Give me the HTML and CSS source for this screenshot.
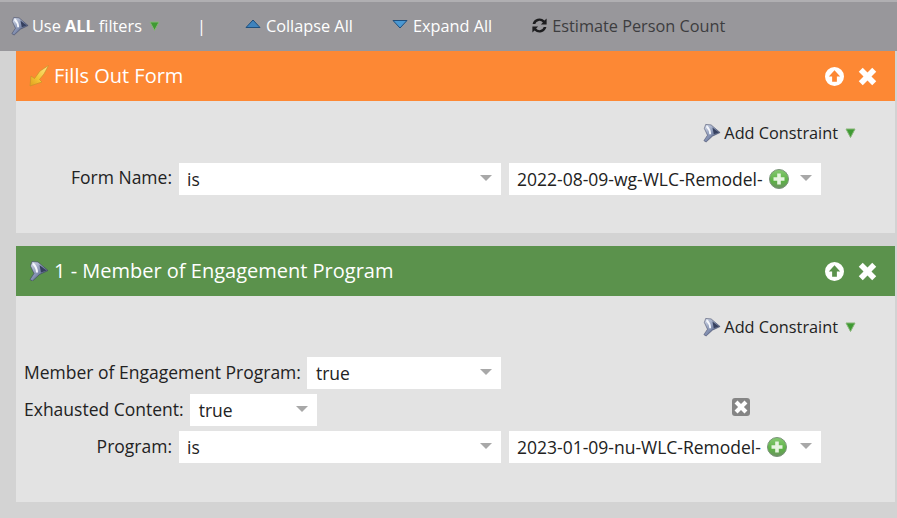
FILE: index.html
```html
<!DOCTYPE html>
<html lang="en">
<head>
<meta charset="utf-8">
<title>Smart List</title>
<link rel="stylesheet" href="styles.css">
</head>
<body>
<svg class="defs" width="0" height="0" aria-hidden="true">
  <defs>
    <linearGradient id="fg" x1="0" y1="0" x2="1" y2="1">
      <stop offset="0" stop-color="#dde3ef"/><stop offset=".5" stop-color="#8491b2"/><stop offset="1" stop-color="#2c3554"/>
    </linearGradient>
    <linearGradient id="bolt" x1="1" y1="0" x2="0" y2="1">
      <stop offset="0" stop-color="#fbe58a"/><stop offset=".6" stop-color="#f4c534"/><stop offset="1" stop-color="#e0a020"/>
    </linearGradient>
    <linearGradient id="plusg" x1="0" y1="0" x2="0" y2="1">
      <stop offset="0" stop-color="#86c972"/><stop offset=".6" stop-color="#5cb245"/><stop offset="1" stop-color="#6d9263"/>
    </linearGradient>
    <symbol id="funnel" viewBox="0 0 20 20">
      <path d="M3 .5L9 1L19 9.500L10.500 13.500L3.500 20L1 18.500L5 12.500L1.500 5Z" fill="url(#fg)" stroke="#3a4260" stroke-width=".6"/>
      <path d="M4 2.500C6.500 5 8 8 8 11.500" fill="none" stroke="#f5f7fc" stroke-width="2"/>
      <path d="M10.500 4L17.500 9.500L12 11.500Z" fill="#36405f"/>
    </symbol>
    <symbol id="down" viewBox="0 0 11 10">
      <path d="M1 1H10L5.500 9.500Z" fill="#3f9a33" stroke="#86b577" stroke-width="1"/>
    </symbol>
    <symbol id="plus" viewBox="0 0 20 20">
      <circle cx="10" cy="10" r="9.500" fill="url(#plusg)" stroke="#7a937a"/>
      <path d="M8.200 4.500h3.600v3.700h3.700v3.600h-3.700v3.700H8.200v-3.700H4.500V8.200h3.700Z" fill="#e6f4e0"/>
    </symbol>
    <symbol id="up" viewBox="0 0 20 20">
      <path fill-rule="evenodd" d="M10 0a10 10 0 1 0 0 20a10 10 0 0 0 0-20ZM10 3.500L16 10H12.500V15.500H7.500V10H4Z" fill="#fff"/>
    </symbol>
    <symbol id="close" viewBox="0 0 20 20">
      <path d="M5 .8L10 5.800L15 .8L19.200 5L14.200 10L19.200 15L15 19.200L10 14.200L5 19.200L.8 15L5.800 10L.8 5Z" fill="#fff"/>
    </symbol>
  </defs>
</svg>

<header class="toolbar">
  <span class="tool tool-filter">
    <svg class="icon-funnel"><use href="#funnel"/></svg>
    <span>Use <b>ALL</b> filters</span>
    <svg class="icon-down"><use href="#down"/></svg>
  </span>
  <span class="divider">|</span>
  <span class="tool tool-collapse">
    <svg class="icon-tri" viewBox="0 0 16 10"><path d="M8 1L15 8.500H1Z" fill="#3f83bd" stroke="#1f4f7d"/></svg>
    <span>Collapse All</span>
  </span>
  <span class="tool tool-expand">
    <svg class="icon-tri" viewBox="0 0 16 10"><path d="M1 1.500H15L8 9Z" fill="#4b98d2" stroke="#1f4f7d"/></svg>
    <span>Expand All</span>
  </span>
  <span class="tool tool-estimate">
    <svg class="icon-refresh" viewBox="0 0 16 16"><path d="M1.500 6.500A6.700 6.700 0 0 1 12.700 3.300L14.700 1.500V7H9.300L11.200 5.100A4.200 4.200 0 0 0 4 6.500Z M14.500 9.500A6.700 6.700 0 0 1 3.300 12.700L1.300 14.500V9H6.700L4.800 10.900A4.200 4.200 0 0 0 12 9.500Z" fill="#1d1d1f"/></svg>
    <span>Estimate Person Count</span>
  </span>
</header>

<main class="panels">
  <section class="panel panel-short">
    <div class="panel-head head-orange">
      <svg class="head-icon head-bolt" viewBox="0 0 20 22"><path d="M1 21L2 11L5.500 13.500L11 6L19.500 .5L15 9L10.500 14.500L13 17Z" fill="url(#bolt)" stroke="#c9922a" stroke-width=".7"/></svg>
      <h2>Fills Out Form</h2>
      <svg class="act"><use href="#up"/></svg>
      <svg class="act act-close"><use href="#close"/></svg>
    </div>
    <div class="panel-body">
      <div class="constraint">
        <svg class="icon-funnel"><use href="#funnel"/></svg>
        <span>Add Constraint</span>
        <svg class="icon-down"><use href="#down"/></svg>
      </div>
      <div class="row">
        <label class="label label-std label-high">Form Name:</label>
        <div class="select sel-op"><span>is</span><i class="caret"></i></div>
        <div class="select sel-val"><span>2022-08-09-wg-WLC-Remodel-</span><svg class="icon-plus"><use href="#plus"/></svg><i class="caret"></i></div>
      </div>
    </div>
  </section>

  <section class="panel panel-tall">
    <div class="panel-head head-green">
      <svg class="head-icon"><use href="#funnel"/></svg>
      <h2>1 - Member of Engagement Program</h2>
      <svg class="act"><use href="#up"/></svg>
      <svg class="act act-close"><use href="#close"/></svg>
    </div>
    <div class="panel-body">
      <div class="constraint">
        <svg class="icon-funnel"><use href="#funnel"/></svg>
        <span>Add Constraint</span>
        <svg class="icon-down"><use href="#down"/></svg>
      </div>
      <div class="row row-tall">
        <label class="label">Member of Engagement Program:</label>
        <div class="select sel-member"><span>true</span><i class="caret"></i></div>
      </div>
      <div class="row">
        <label class="label">Exhausted Content:</label>
        <div class="select sel-small"><span>true</span><i class="caret"></i></div>
        <span class="remove"><svg viewBox="0 0 20 20"><use href="#close"/></svg></span>
      </div>
      <div class="row">
        <label class="label label-std">Program:</label>
        <div class="select sel-op"><span>is</span><i class="caret"></i></div>
        <div class="select sel-val"><span>2023-01-09-nu-WLC-Remodel-</span><svg class="icon-plus"><use href="#plus"/></svg><i class="caret"></i></div>
      </div>
    </div>
  </section>
</main>
</body>
</html>
```

FILE: styles.css
```css
* { box-sizing: border-box; }
html, body { margin: 0; padding: 0; height: 100%; }
body {
  background: #d3d3d3;
  font-family: "Open Sans", "Noto Sans", sans-serif;
  font-size: 17.5px;
  color: #222;
  overflow: hidden;
}
.defs { position: absolute; }

.toolbar {
  height: 51px;
  background: #98979b;
  border-top: 2px solid #b0afb2;
  display: flex;
  align-items: center;
  color: #fff;
  padding-left: 11px;
  font-size: 16.3px;
  line-height: 22px;
  padding-bottom: 2px;
}
.toolbar b { font-weight: 700; }
.tool { display: flex; align-items: center; }
.icon-funnel { width: 18px; height: 20px; flex: none; }
.icon-down { width: 11px; height: 10px; flex: none; margin-left: 7px; }
.tool-filter span { margin-left: 3px; }
.divider { margin-left: 37px; width: 6px; }
.tool-collapse { margin-left: 42px; }
.icon-tri { width: 16px; height: 10px; flex: none; margin-right: 5px; margin-top: -3px; }
.tool-expand { margin-left: 39px; }
.tool-estimate { margin-left: 39px; color: #3d3d3f; }
.icon-refresh { width: 17px; height: 17px; flex: none; margin-right: 4px; }

.panels { padding: 0 2px 0 16px; }
.panel { margin-bottom: 13px; }
.panel-head {
  height: 50px;
  display: flex;
  align-items: center;
  color: #fff;
  padding: 0 18px 0 13px;
}
.panel-head h2 {
  margin: 0 auto 0 5px;
  font-size: 20px;
  font-weight: 400;
  line-height: 26px;
  padding-bottom: 1px;
}
.head-orange { background: #fd8834; }
.head-green { background: #5b924c; }
.head-icon { width: 20px; height: 20px; flex: none; }
.head-bolt { height: 22px; }
.act { width: 19px; height: 19px; flex: none; }
.act-close { margin-left: 14px; }

.panel-body { background: #e3e3e3; padding: 22px 0 0 8px; }
.panel-short .panel-body { height: 132px; }
.panel-tall .panel-body { height: 206px; padding-top: 21px; }

.constraint {
  display: flex;
  align-items: center;
  justify-content: flex-end;
  height: 20px;
  padding-right: 39px;
  font-size: 16.3px;
  color: #222;
  white-space: nowrap;
}
.constraint span { margin-left: 3px; }

.row {
  display: flex;
  align-items: center;
  height: 32px;
  margin-top: 5px;
}
.panel-short .row { margin-top: 20px; }
.panel-tall .row-tall { margin-top: 20px; }
.label { white-space: nowrap; line-height: 22px; margin-right: 6px; padding-bottom: 2px; }
.label-std { width: 148px; margin-right: 7px; text-align: right; }
.label-high { padding-bottom: 4px; }

.select {
  height: 32px;
  background: #fff;
  display: flex;
  align-items: center;
  padding: 0 8px;
  color: #222;
  white-space: nowrap;
}
.select span { line-height: 22px; }
.caret {
  width: 0; height: 0;
  border-left: 6px solid transparent;
  border-right: 6px solid transparent;
  border-top: 6px solid #a8a8a8;
  margin-left: auto;
  margin-right: 1px;
  margin-top: -3px;
}
.sel-op { width: 322px; margin-right: 8px; }
.sel-val { width: 312px; }
.sel-member { width: 194px; padding-left: 9px; }
.sel-small { width: 127px; padding-left: 9px; }
.icon-plus { width: 20px; height: 20px; flex: none; margin-left: 6px; }

.remove {
  width: 18px; height: 18px;
  background: #858585;
  border-radius: 3px;
  margin-left: 415px;
  margin-top: -6px;
  padding: 2px;
  display: block;
}
.remove svg { display: block; width: 14px; height: 14px; }
```
